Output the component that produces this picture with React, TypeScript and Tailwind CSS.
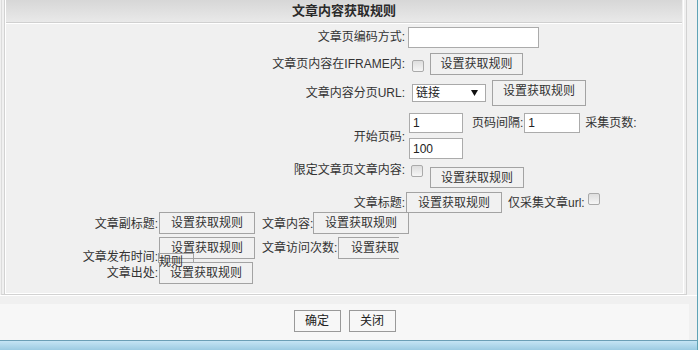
import React from "react";

function Btn({ className = "", children = "设置获取规则" }: { className?: string; children?: React.ReactNode }) {
  return (
    <div className={"shrink-0 border border-[#a3a3a3] bg-[#f1f1f1] text-[12px] leading-[16px] text-[#333] flex items-center justify-center " + className}>
      {children}
    </div>
  );
}

function Check({ className = "" }: { className?: string }) {
  return (
    <div className={"shrink-0 w-[12px] h-[12px] border border-[#aaaaaa] rounded-[2px] bg-linear-to-b from-[#dedede] to-[#f6f6f6] " + className} />
  );
}

function Input({ className = "", value = "" }: { className?: string; value?: string }) {
  return (
    <div className={"shrink-0 bg-white border border-[#ababab] text-[12px] leading-[16px] text-[#222] pl-[3px] flex items-center " + className}>
      {value}
    </div>
  );
}

export default function App() {
  return (
    <div className="relative w-[700px] h-[350px] bg-[#f0f0f0] flex overflow-hidden font-['Liberation_Sans','Noto_Sans_CJK_SC',sans-serif] text-[12px] leading-[16px] text-[#333]">
      <div className="w-[697px] h-full flex flex-col">
        {/* panel */}
        <div className="ml-[1px] w-[686px] h-[295px] border-l border-r border-b border-l-[#dcdcdc] border-r-[#d2d2d2] border-b-[#d2d2d2] pl-[2px] pr-[2px]">
          <div className="h-full border-l border-[#d2d2d2] shadow-[inset_1px_0_0_#ffffff,inset_-1px_0_0_#ffffff,inset_0_-1px_0_#ffffff] pl-[1px] pr-[2px]">
            <div className="h-[23px] bg-linear-to-b from-[#d7d7d7] to-[#e9e9e9] border-b border-[#d0d0d0] flex items-center justify-center text-[13px] font-bold text-[#2a2a2a]">
              文章内容获取规则
            </div>
            <div className="h-px bg-white" />
            {/* table rows: label column ends at x=404 */}
            <div className="flex items-center h-[26px]">
              <div className="w-[399px] text-right shrink-0">文章页编码方式:</div>
              <Input className="ml-[3px] w-[131px] h-[21px]" />
            </div>
            <div className="flex items-center h-[28px]">
              <div className="w-[399px] text-right shrink-0">文章页内容在IFRAME内:</div>
              <Check className="ml-[7px] mt-[3px]" />
              <Btn className="ml-[6px] w-[93px] h-[22px]" />
            </div>
            <div className="flex items-center h-[30px]">
              <div className="w-[399px] text-right shrink-0">文章内容分页URL:</div>
              <div className="ml-[7px] w-[74px] h-[18px] bg-white border border-[#a9a9a9] flex items-center justify-between pl-[3px] pr-[7px] text-[#222]">
                <span>链接</span>
                <svg width="7" height="6" viewBox="0 0 7 6"><polygon points="0,0 7,0 3.5,6" fill="#111" /></svg>
              </div>
              <Btn className="ml-[6px] w-[94px] h-[26px] !items-start pt-[2px]" />
            </div>
            <div className="flex h-[58px]">
              <div className="w-[399px] text-right shrink-0 self-center">开始页码:</div>
              <div className="ml-[4px] pt-[5px] flex flex-col">
                <div className="flex items-center h-[20px]">
                  <Input className="w-[54px] h-[20px]" value="1" />
                  <span className="ml-[9px]">页码间隔:</span>
                  <Input className="ml-[1px] w-[56px] h-[20px]" value="1" />
                  <span className="ml-[5px]">采集页数:</span>
                </div>
                <Input className="mt-[5px] w-[54px] h-[21px]" value="100" />
              </div>
            </div>
            <div className="flex items-start h-[23px]">
              <div className="w-[399px] text-right shrink-0 -mt-[4px]">限定文章页文章内容:</div>
              <Check className="ml-[6px] -mt-[1px]" />
              <Btn className="ml-[7px] mt-[1px] w-[94px] h-[21px]" />
            </div>
            <div className="flex items-start h-[23px]">
              <div className="w-[399px] text-right shrink-0 mt-[6px]">文章标题:</div>
              <Btn className="ml-[1px] mt-[3px] w-[96px] h-[21px]" />
              <span className="ml-[6px] mt-[6px]">仅采集文章url:</span>
              <Check className="ml-[3px] mt-[4px]" />
            </div>
            {/* free rows */}
            <div className="flex items-start h-[24px]">
              <div className="w-[152px] text-right shrink-0 mt-[4px]">文章副标题:</div>
              <Btn className="ml-[1px] w-[96px] h-[22px]" />
              <div className="ml-[7px] w-[51px] text-right shrink-0 mt-[4px] whitespace-nowrap">文章内容:</div>
              <Btn className="w-[96px] h-[22px]" />
            </div>
            <div className="flex items-start h-[26px]">
              <div className="w-[152px] text-right shrink-0 mt-[13px] whitespace-nowrap">文章发布时间:</div>
              <Btn className="ml-[1px] mt-[1px] w-[96px] h-[22px]" />
              <div className="ml-[7px] w-[75px] text-right shrink-0 mt-[4px] whitespace-nowrap">文章访问次数:</div>
              <div className="ml-[1px] mt-[1px] w-[61px] h-[22px] overflow-hidden shrink-0">
                <div className="w-[96px] h-[22px] border border-[#a3a3a3] bg-[#f1f1f1] flex items-center pl-[12px] text-[#333]">设置获取规则</div>
              </div>
            </div>
            <div className="flex items-start h-[24px]">
              <div className="w-[152px] text-right shrink-0 mt-[3px]">文章出处:</div>
              <Btn className="ml-[1px] w-[94px] h-[22px]" />
            </div>
          </div>
        </div>
        <div className="h-px bg-white" />
        <div className="h-[8px] bg-[#f0f0f0]" />
        <div className="h-[36px] bg-[#f7f7f7] w-[689px] flex justify-center gap-[8px] pt-[6px]">
          <Btn className="w-[47px] h-[22px] !border-[#999] !bg-[#f7f7f7] !text-[#222]">确定</Btn>
          <Btn className="w-[47px] h-[22px] !border-[#999] !bg-[#f7f7f7] !text-[#222]">关闭</Btn>
        </div>
        <div className="flex-1 border-t border-[#6b9fb6] bg-linear-to-b from-[#c4e4f4] to-[#9ccbe2]" />
      </div>
      <div className="w-px h-full bg-[#5fa3b6]" />
      <div className="w-[2px] h-full bg-[#eef4f6]" />

      <div className="absolute left-[158px] top-[253px] w-[36px] h-[10px] border-t border-l border-r border-[#a3a3a3]" />
      <div className="absolute left-[159px] top-[254px] text-[#333]">规则</div>
    </div>
  );
}
